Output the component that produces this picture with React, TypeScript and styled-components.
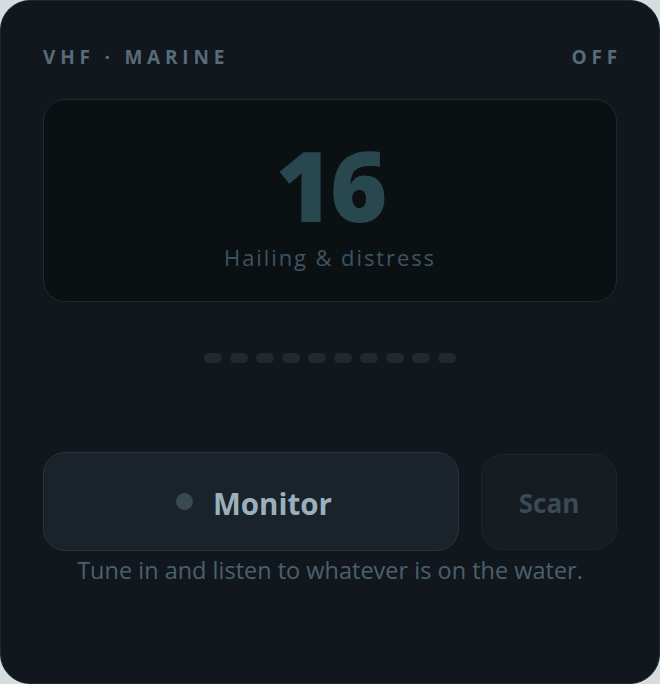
import React from 'react';
import styled, { createGlobalStyle } from 'styled-components';

const GlobalStyle = createGlobalStyle`
	html, body {
		margin: 0;
		padding: 0;
		background: #d5dde0;
	}
	* {
		box-sizing: border-box;
	}
`;

const Card = styled.div`
	width: 660px;
	height: 684px;
	display: flex;
	flex-direction: column;
	padding: 43px 42px 0;
	background: #12171d;
	border: 1px solid #1e282d;
	border-radius: 30px;
	font-family: 'Open Sans', 'Noto Sans', sans-serif;
`;

const Header = styled.div`
	display: flex;
	justify-content: space-between;
	align-items: center;
	height: 26px;
	margin-right: -5px;
`;

const HeaderLabel = styled.span`
	font-size: 19px;
	font-weight: 700;
	letter-spacing: 4.8px;
	color: #566c7a;
`;

const Display = styled.div`
	margin-top: 29px;
	height: 203px;
	display: flex;
	flex-direction: column;
	align-items: center;
	background: #0b1013;
	border: 1px solid #1f292e;
	border-radius: 22px;
`;

const Channel = styled.div`
	margin-top: 26px;
	font-size: 98px;
	font-weight: 800;
	line-height: 116px;
	letter-spacing: -3px;
	color: #28474f;
`;

const ChannelName = styled.div`
	margin-top: 0;
	font-size: 22px;
	line-height: 30px;
	letter-spacing: 1.9px;
	color: #3d5461;
`;

const Dots = styled.div`
	margin-top: 51px;
	display: flex;
	justify-content: center;
	gap: 8px;
`;

const Dot = styled.span`
	width: 18px;
	height: 10px;
	border-radius: 5px;
	background: #1f292f;
`;

const Actions = styled.div`
	margin-top: 89px;
	display: flex;
	align-items: center;
	gap: 22px;
`;

const MonitorButton = styled.button`
	flex: 1;
	height: 99px;
	display: flex;
	align-items: center;
	justify-content: center;
	gap: 20px;
	padding: 3px 0 0 6px;
	background: #1a2329;
	border: 1px solid #29353b;
	border-radius: 22px;
	font-family: inherit;
	font-size: 29.5px;
	font-weight: 700;
	color: #9ab1bd;
	cursor: pointer;
`;

const Indicator = styled.span`
	width: 17px;
	height: 17px;
	border-radius: 50%;
	background: #3a4a53;
	margin-top: -4px;
`;

const ScanButton = styled.button`
	width: 136px;
	height: 96px;
	padding-top: 3px;
	background: #161c21;
	border: 1px solid #1d252a;
	border-radius: 22px;
	font-family: inherit;
	font-size: 26px;
	font-weight: 700;
	color: #3b4b55;
	cursor: pointer;
`;

const Hint = styled.p`
	margin: 3px 0 0;
	text-align: center;
	font-size: 23.5px;
	color: #4a606d;
`;

export default function App() {
	return (
		<>
			<GlobalStyle />
			<Card>
				<Header>
					<HeaderLabel>VHF · MARINE</HeaderLabel>
					<HeaderLabel>OFF</HeaderLabel>
				</Header>
				<Display>
					<Channel>16</Channel>
					<ChannelName>Hailing &amp; distress</ChannelName>
				</Display>
				<Dots>
					{Array.from({ length: 10 }, (_, i) => (
						<Dot key={i} />
					))}
				</Dots>
				<Actions>
					<MonitorButton>
						<Indicator />
						Monitor
					</MonitorButton>
					<ScanButton>Scan</ScanButton>
				</Actions>
				<Hint>Tune in and listen to whatever is on the water.</Hint>
			</Card>
		</>
	);
}
